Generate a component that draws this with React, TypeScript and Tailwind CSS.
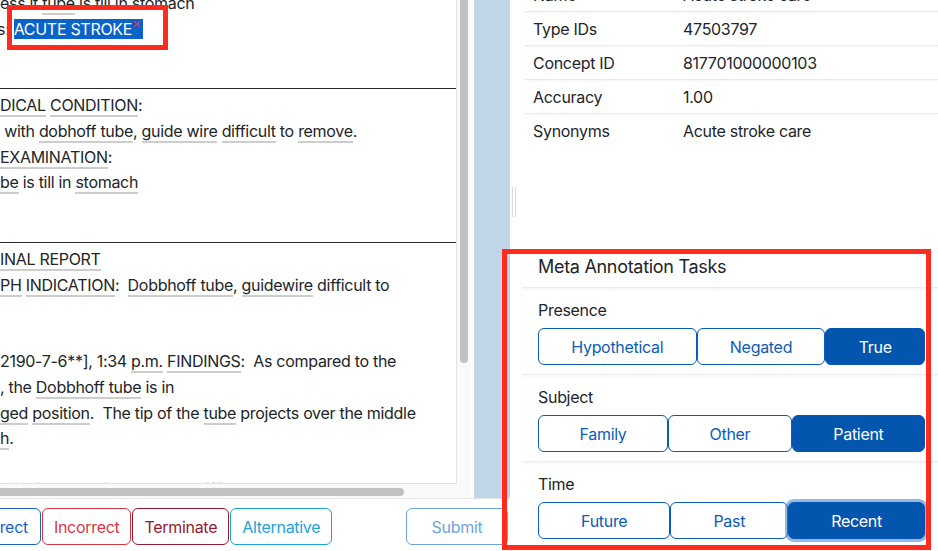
import React from 'react'

type Seg = string | { u: string }

const lines: (Seg[] | 'rule' | 'hl')[] = [
  ['ess it ', { u: 'tube' }, ' is till in stomach'],
  'hl',
  [],
  'rule',
  [{ u: 'DICAL' }, ' ', { u: 'CONDITION' }, ':'],
  [' with ', { u: 'dobhoff tube' }, ', ', { u: 'guide wire' }, ' ', { u: 'difficult' }, ' to ', { u: 'remove' }, '.'],
  [{ u: 'EXAMINATION' }, ':'],
  [{ u: 'be' }, ' is till in ', { u: 'stomach' }],
  [],
  'rule',
  [{ u: 'INAL REPORT' }],
  [{ u: 'PH' }, ' ', { u: 'INDICATION' }, ':  ', { u: 'Dobbhoff tube' }, ', ', { u: 'guidewire' }, ' difficult to'],
  [],
  [],
  ['2190-7-6**], 1:34 ', { u: 'p.m.' }, ' ', { u: 'FINDINGS' }, ':  As compared to the'],
  [', the ', { u: 'Dobbhoff tube' }, ' is in'],
  [{ u: 'ged' }, ' ', { u: 'position' }, '.  The tip of the ', { u: 'tube' }, ' projects over the middle'],
  [{ u: 'h' }, '.'],
  [],
  ['ntinuing to be in place, but difficult to remove, the tube should be removed'],
]

const info = [
  ['Name', 'Acute stroke care'],
  ['Type IDs', '47503797'],
  ['Concept ID', '817701000000103'],
  ['Accuracy', '1.00'],
  ['Synonyms', 'Acute stroke care'],
]

const tasks = [
  { name: 'Presence', options: ['Hypothetical', 'Negated', 'True'], selected: 'True', focus: false },
  { name: 'Subject', options: ['Family', 'Other', 'Patient'], selected: 'Patient', focus: false },
  { name: 'Time', options: ['Future', 'Past', 'Recent'], selected: 'Recent', focus: true },
]

function TextLine({ line }: { line: Seg[] | 'rule' | 'hl' }) {
  if (line === 'rule') {
    return (
      <div className="h-[25.6px] flex flex-col justify-end pb-[4px]">
        <div className="h-px bg-[#2a2a2a]" />
      </div>
    )
  }
  if (line === 'hl') {
    return (
      <div className="h-[25.6px] whitespace-pre -ml-[3px]">
        s:{' '}
        <span className="bg-[#0a63c9] text-white pr-[3px]">
          ACUTE STROKE
          <sup className="text-[#e5333b] text-[13px]">×</sup>
        </span>
      </div>
    )
  }
  return (
    <div className="h-[25.6px] whitespace-pre">
      {line.map((s, i) =>
        typeof s === 'string' ? (
          <span key={i}>{s}</span>
        ) : (
          <span key={i} className="border-b-2 border-[#cdcdcd]">
            {s.u}
          </span>
        )
      )}
    </div>
  )
}

export default function App() {
  return (
    <div
      className="relative w-[938px] h-[551px] overflow-hidden flex bg-white text-[#212529] tracking-[-0.3px]"
      style={{ fontFamily: 'Inter, "Liberation Sans", sans-serif' }}
    >
      {/* left column */}
      <div className="w-[510px] flex flex-col">
        <div className="h-[498px] flex">
          <div className="w-[471px] flex flex-col">
            <div className="h-[484px] flex">
              <div className="w-[457px] border-r border-b border-[#e2e2e2] overflow-hidden text-[16px] leading-[25.6px]">
                <div className="-mt-[9px]">
                  {lines.map((l, i) => (
                    <TextLine key={i} line={l} />
                  ))}
                </div>
              </div>
              <div className="flex-1 bg-[#fafafa] pl-[3px]">
                <div className="w-[8px] h-[363px] bg-[#c1c1c1] rounded-b-full" />
              </div>
            </div>
            <div className="h-[14px] flex bg-[#fafafa]">
              <div className="w-[457px] pt-[4px]">
                <div className="w-[404px] h-[8px] bg-[#c1c1c1] rounded-r-full" />
              </div>
            </div>
          </div>
          <div className="flex-1 bg-[#c2d6ea] border-l-[3px] border-white" />
        </div>
        <div className="flex-1 border-t border-[#e4e4e4] pt-[9px] flex items-start text-[16px]">
          <div className="flex gap-px -ml-[40px]">
            <button className="h-[37px] px-[12px] rounded-[6px] border border-[#1a62c4] text-[#1a62c4]">Correct</button>
            <button className="h-[37px] px-[11px] rounded-[6px] border border-[#dc3545] text-[#dc3545]">Incorrect</button>
            <button className="h-[37px] px-[11px] rounded-[6px] border border-[#92192f] text-[#92192f]">Terminate</button>
            <button className="h-[37px] px-[11px] rounded-[6px] border border-[#1ba3d8] text-[#1ba3d8]">Alternative</button>
          </div>
          <button className="ml-auto mr-[2px] w-[102px] h-[37px] rounded-[6px] border border-[#6fa5dc] text-[#6fa5dc]">Submit</button>
        </div>
      </div>

      {/* right column */}
      <div className="flex-1 flex flex-col text-[16px]">
        <div className="ml-[15px] -mt-[22px]">
          {info.map(([k, v], i) => (
            <div
              key={k}
              className={`h-[34px] flex items-center ${i < info.length - 1 ? 'border-b border-[#e8e8e8] shadow-[0_1px_2px_rgba(0,0,0,0.04)]' : ''}`}
            >
              <div className="w-[150px] pl-[8px]">{k}</div>
              <div className="pl-[8px]">{v}</div>
            </div>
          ))}
        </div>
        <div className="h-[102px] pl-[2px] pt-[39px]">
          <div className="w-[4px] h-[30px] border-x border-[#dcdcdc]" />
        </div>
        <div className="ml-[12px]">
          <div className="h-[38px] pt-[6px] pl-[16px] text-[18px] leading-[22px] border-b border-[#ececec] shadow-[0_2px_3px_rgba(0,0,0,0.04)]">
            Meta Annotation Tasks
          </div>
          {tasks.map((t, ti) => (
            <div
              key={t.name}
              className={`pt-[12px] pb-[9px] pl-[16px] pr-[13px] ${ti < tasks.length - 1 ? 'border-b border-[#ececec] shadow-[0_2px_3px_rgba(0,0,0,0.04)]' : ''}`}
            >
              <div className="leading-[20px] mb-[8px]">{t.name}</div>
              <div className="flex">
                {t.options.map((o) =>
                  o === t.selected ? (
                    <button
                      key={o}
                      className={`flex-auto h-[37px] px-[12px] rounded-[6px] border border-[#0455ad] bg-[#0455ad] text-white ${t.focus ? 'shadow-[0_0_0_3px_rgba(60,130,205,0.55)]' : ''}`}
                    >
                      {o}
                    </button>
                  ) : (
                    <button
                      key={o}
                      className="flex-auto h-[37px] px-[12px] rounded-[6px] border border-[#0b5cb8] text-[#0b5cb8]"
                    >
                      {o}
                    </button>
                  )
                )}
              </div>
            </div>
          ))}
        </div>
      </div>

      {/* red annotation boxes */}
      <div className="absolute left-[7px] top-[5px] w-[161px] h-[45px] border-[5px] border-[#fe2b1e]" />
      <div className="absolute left-[502px] top-[249px] w-[429px] h-[301px] border-[5px] border-[#fe2b1e]" />
    </div>
  )
}
